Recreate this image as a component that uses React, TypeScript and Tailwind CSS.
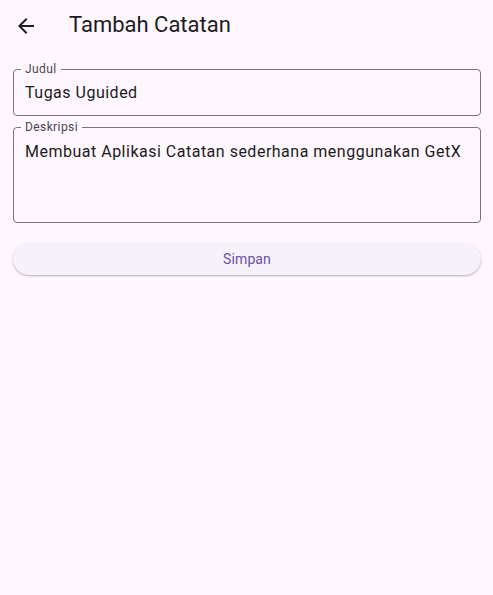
import React from "react";

function Field({ label, value, tall }: { label: string; value: string; tall?: boolean }) {
  return (
    <div
      className={`relative rounded-[4px] border border-[#79747e] ${tall ? "h-[96px]" : "h-[47px]"}`}
    >
      <span className="absolute left-[7px] top-[-9px] bg-[#fef7ff] px-[4px] text-[12px] leading-[16px] tracking-[0.4px] text-[#49454f]">
        {label}
      </span>
      <div className={`px-[11px] text-[16px] leading-[24px] tracking-[0.5px] text-[#1d1b20] ${tall ? "pt-[12px]" : "pt-[11px]"}`}>
        {value}
      </div>
    </div>
  );
}

export default function App() {
  return (
    <div
      className="min-h-[595px] w-full bg-[#fef7ff]"
      style={{ fontFamily: "Roboto, 'Noto Sans', sans-serif" }}
    >
      <div className="flex h-[50px] items-center">
        <div className="flex w-[50px] items-center justify-center pl-[1px] pt-[1px]">
          <svg width="24" height="24" viewBox="0 0 24 24" fill="#1d1b20">
            <path d="M20 11H7.83l5.59-5.59L12 4l-8 8 8 8 1.41-1.41L7.83 13H20v-2z" />
          </svg>
        </div>
        <div className="ml-[19px] text-[22px] leading-[28px] text-[#1d1b20]">Tambah Catatan</div>
      </div>
      <div className="flex flex-col pl-[13px] pr-[12px] pt-[19px]">
        <Field label="Judul" value="Tugas Uguided" />
        <div className="h-[11px]" />
        <Field label="Deskripsi" value="Membuat Aplikasi Catatan sederhana menggunakan GetX" tall />
        <div className="h-[20px]" />
        <button className="flex h-[32px] w-full items-center justify-center rounded-full bg-[#f7f2fa] text-[14px] font-normal tracking-[0.1px] text-[#6750a4] shadow-[0_1px_2px_rgba(0,0,0,0.3)]">
          Simpan
        </button>
      </div>
    </div>
  );
}
